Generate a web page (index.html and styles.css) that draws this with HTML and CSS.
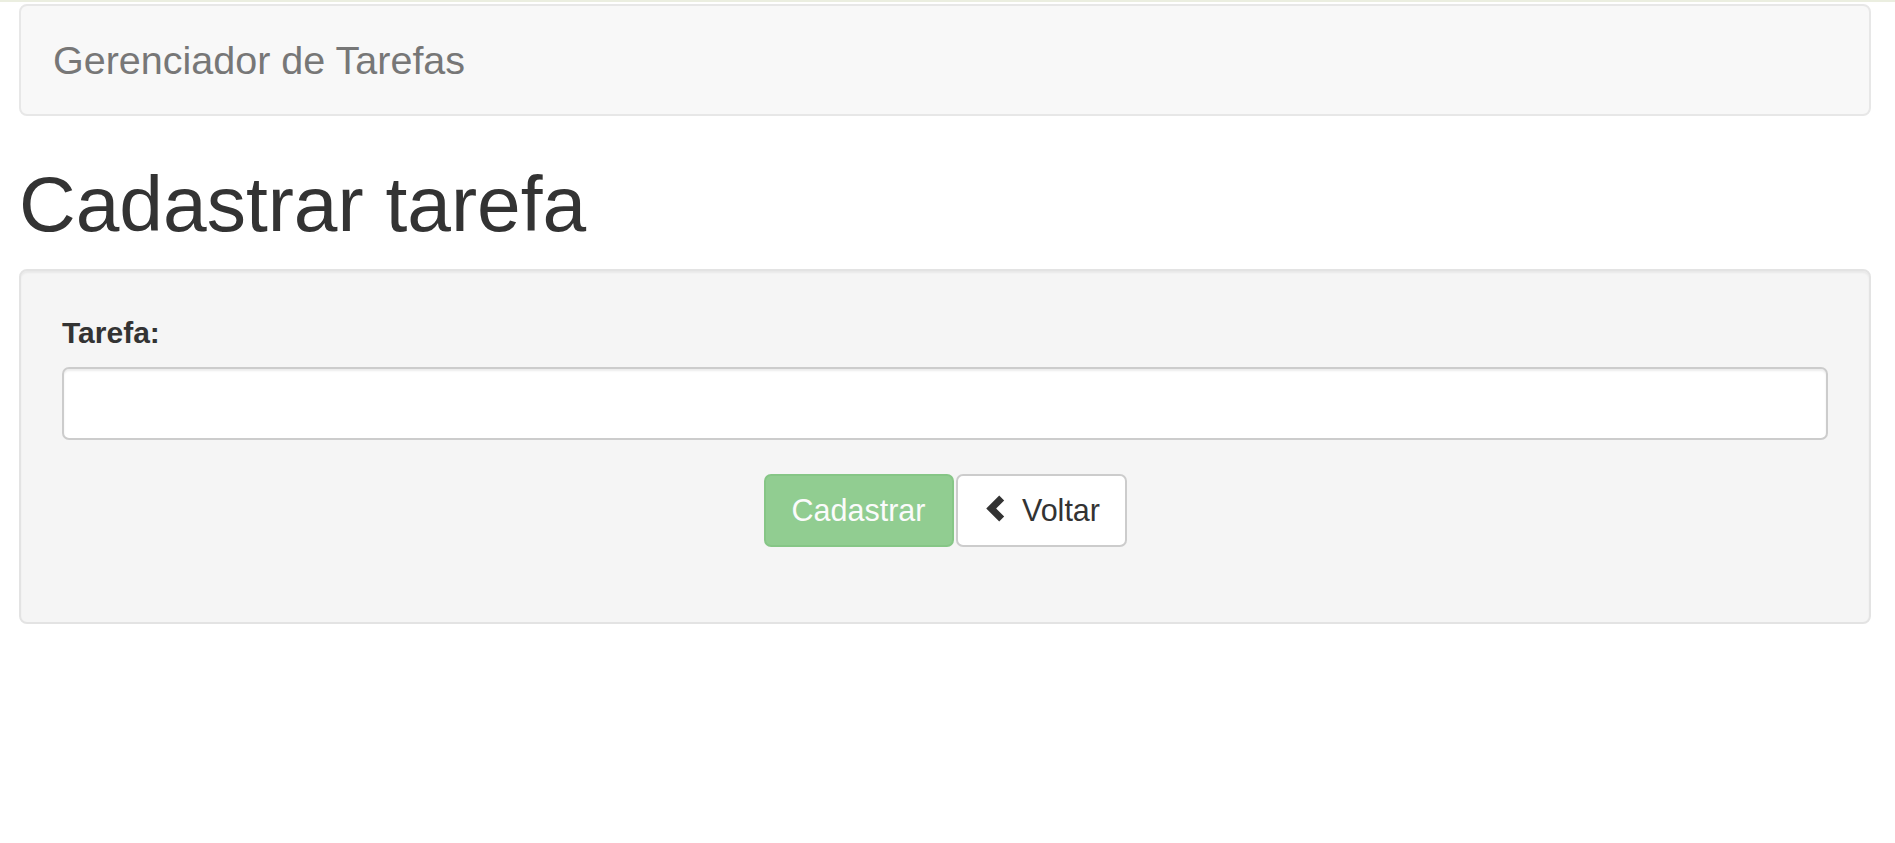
FILE: index.html
```html
<!DOCTYPE html>
<html lang="pt-BR">
<head>
<meta charset="utf-8">
<title>Gerenciador de Tarefas</title>
<link rel="stylesheet" href="styles.css">
</head>
<body>
<div class="topline"></div>
<div class="page">
  <nav class="navbar">
    <a class="brand" href="#">Gerenciador de Tarefas</a>
  </nav>
  <h1 class="title">Cadastrar tarefa</h1>
  <form class="well">
    <div class="form-group">
      <label class="label" for="tarefa">Tarefa:</label>
      <input class="input" id="tarefa" type="text">
    </div>
    <div class="actions">
      <button class="btn btn-success" type="submit" disabled>Cadastrar</button>
      <a class="btn btn-default" href="#">
        <svg class="chevron" width="19" height="27" viewBox="0 0 19 27" aria-hidden="true">
          <polyline points="15.7,3 5.2,13.5 15.7,24" fill="none" stroke="#333" stroke-width="7" stroke-linejoin="miter" stroke-linecap="butt" stroke-miterlimit="4"/>
        </svg>
        <span>Voltar</span>
      </a>
    </div>
  </form>
</div>
</body>
</html>
```

FILE: styles.css
```css
html, body {
  margin: 0;
  padding: 0;
  background: #fff;
}

body {
  font-family: "Liberation Sans", Arial, Helvetica, sans-serif;
  color: #333;
}

.topline {
  height: 2px;
  background: #ebeee0;
}

.page {
  padding: 0 24px 0 19px;
}

.navbar {
  margin-top: 2px;
  height: 108px;
  border: 2px solid #e7e7e7;
  border-radius: 8px;
  background: #f8f8f8;
  display: flex;
  align-items: center;
}

.brand {
  display: block;
  padding-left: 32px;
  font-size: 39.5px;
  line-height: 108px;
  color: #777;
  text-decoration: none;
}

.title {
  margin: 45px 0 22px;
  font-size: 78.5px;
  font-weight: 400;
  line-height: 1.1;
  color: #333;
}

.well {
  margin: 0;
  border: 2px solid #e3e3e3;
  border-radius: 8px;
  background: #f5f5f5;
  box-shadow: inset 0 2px 2px rgba(0, 0, 0, 0.05);
  padding: 40.5px 41px 75px;
}

.form-group {
  display: flex;
  flex-direction: column;
  margin-bottom: 34px;
}

.label {
  font-size: 30px;
  font-weight: 700;
  line-height: 41px;
  margin-bottom: 14px;
  color: #333;
}

.input {
  box-sizing: border-box;
  height: 73px;
  width: 100%;
  margin: 0;
  border: 2px solid #ccc;
  border-radius: 7px;
  background: #fff;
  box-shadow: inset 0 2px 2px rgba(0, 0, 0, 0.075);
  font: inherit;
  font-size: 30px;
  padding: 0 25px;
  outline: none;
}

.actions {
  display: flex;
  justify-content: center;
  gap: 2px;
}

.btn {
  box-sizing: border-box;
  height: 73px;
  display: inline-flex;
  align-items: center;
  border: 2px solid transparent;
  border-radius: 7px;
  font-family: "Liberation Sans", Arial, Helvetica, sans-serif;
  font-size: 30.5px;
  text-decoration: none;
  margin: 0;
}

.btn-success {
  width: 190px;
  justify-content: center;
  padding: 0;
  background: #5cb85c;
  border-color: #4cae4c;
  color: #fff;
  opacity: 0.65;
}

.btn-default {
  width: 171px;
  padding: 0 0 0 28.5px;
  background: #fff;
  border-color: #ccc;
  color: #333;
}

.chevron {
  display: block;
  margin: 0 17px 3px 0;
  flex: none;
}
```
